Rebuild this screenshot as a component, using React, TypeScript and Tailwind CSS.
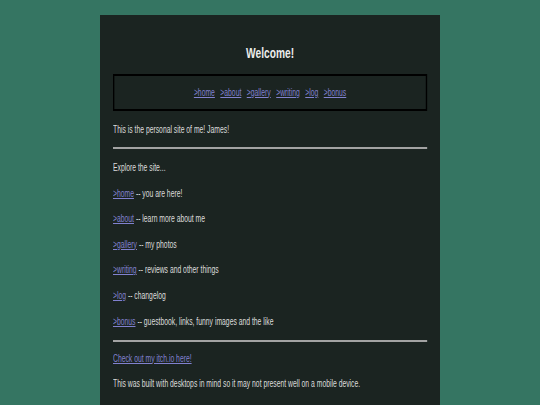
import React from 'react';

const links = [
    { label: '>home', note: 'you are here!' },
    { label: '>about', note: 'learn more about me' },
    { label: '>gallery', note: 'my photos' },
    { label: '>writing', note: 'reviews and other things' },
    { label: '>log', note: 'changelog' },
    { label: '>bonus', note: 'guestbook, links, funny images and the like' },
];

const linkCls = 'text-[#8181cf] underline underline-offset-1';

export default function App() {
    return (
        <div className="min-h-screen w-full overflow-hidden bg-[#357562] pt-[15px] font-['Liberation_Sans',Arial,sans-serif]">
            <div className="mx-auto w-[340px] bg-[#1b2421] px-[13px] pb-[20px] pt-[30px] text-[10px] leading-[12px] text-[#dcdcdc]">
                {/* the reference is squashed horizontally, so lay out wide and squeeze */}
                <div className="w-[462px] origin-left scale-x-[0.68]">
                    <h1 className="text-center text-[15px] font-bold leading-[16px] text-[#ececec]">Welcome!</h1>

                    <nav className="mt-[13px] flex h-[37px] items-center justify-center gap-[8px] border-2 border-black">
                        {links.map((l) => (
                            <a key={l.label} href="#" className={linkCls}>
                                {l.label}
                            </a>
                        ))}
                    </nav>

                    <p className="mt-[13px]">This is the personal site of me! James!</p>

                    <div className="mt-[11px] h-[2px] bg-[#a3a3a3]" />

                    <div className="mt-[13px] flex flex-col gap-[13.6px]">
                        <p>Explore the site...</p>
                        {links.map((l) => (
                            <p key={l.label}>
                                <a href="#" className={linkCls}>
                                    {l.label}
                                </a>{' '}
                                -- {l.note}
                            </p>
                        ))}
                    </div>

                    <div className="mt-[12px] h-[2px] bg-[#a3a3a3]" />

                    <p className="mt-[11px]">
                        <a href="#" className={linkCls}>
                            Check out my itch.io here!
                        </a>
                    </p>
                    <p className="mt-[13px]">This was built with desktops in mind so it may not present well on a mobile device.</p>
                </div>
            </div>
        </div>
    );
}
